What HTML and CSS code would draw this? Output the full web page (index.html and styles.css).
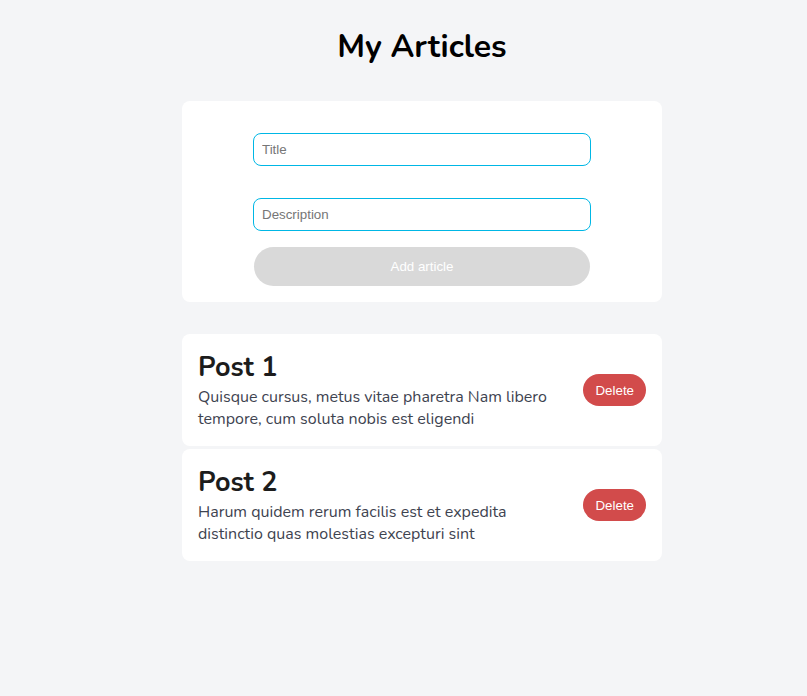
FILE: index.html
```html
<!DOCTYPE html>
<html lang="en">
<head>
  <meta charset="UTF-8">
  <meta name="viewport" content="width=device-width, initial-scale=1.0">
  <title>My Articles</title>
  <link rel="stylesheet" href="styles.css">
</head>
<body>
  <div class="page">
    <h1>My Articles</h1>

    <form class="card article-form">
      <input type="text" placeholder="Title">
      <input type="text" placeholder="Description">
      <button type="button" class="add-btn" disabled>Add article</button>
    </form>

    <div class="articles">
      <div class="card article">
        <div class="article-text">
          <h2>Post 1</h2>
          <p>Quisque cursus, metus vitae pharetra Nam libero tempore, cum soluta nobis est eligendi</p>
        </div>
        <button type="button" class="delete-btn">Delete</button>
      </div>
      <div class="card article">
        <div class="article-text">
          <h2>Post 2</h2>
          <p>Harum quidem rerum facilis est et expedita distinctio quas molestias excepturi sint</p>
        </div>
        <button type="button" class="delete-btn">Delete</button>
      </div>
    </div>
  </div>
</body>
</html>
```

FILE: styles.css
```css
body { margin: 0; background: #f4f5f7; font-family: Nunito, Lato, "Open Sans", sans-serif; color: #222; }
.page { width: 480px; margin-left: 182px; padding-top: 25px; }
h1 { margin: 0 0 32px; text-align: center; font-size: 32px; font-weight: 700; line-height: 44px; color: #000; }
.card { background: #fff; border-radius: 8px; }

.article-form { display: flex; flex-direction: column; align-items: center; padding: 32px 0 16px; }
.article-form input { box-sizing: border-box; width: 338px; height: 33px; padding: 0 8px; border: 1px solid #00b7e5; border-radius: 8px; font-family: "Liberation Sans", Arial, sans-serif; font-size: 13.33px; color: #333; outline: none; }
.article-form input::placeholder { color: #767676; }
.article-form input + input { margin-top: 32px; }
.add-btn { width: 336px; height: 39px; margin-top: 16px; border: none; border-radius: 20px; background: #d9d9d9; color: #fff; font-family: "Liberation Sans", Arial, sans-serif; font-size: 13.33px; }

.articles { display: flex; flex-direction: column; gap: 3px; margin-top: 32px; }
.article { display: flex; align-items: center; justify-content: space-between; height: 112px; box-sizing: border-box; padding: 0 16px; }
.article-text { width: 360px; }
.article h2 { margin: 0; font-size: 27px; font-weight: 700; line-height: 36px; color: #1c1c1c; }
.article p { margin: 0; font-size: 16px; line-height: 22px; color: #3e4350; }
.delete-btn { height: 32px; padding: 0 12px; border: none; border-radius: 16px; background: #d24b4b; color: #fff; font-family: "Liberation Sans", Arial, sans-serif; font-size: 13.33px; }
```
